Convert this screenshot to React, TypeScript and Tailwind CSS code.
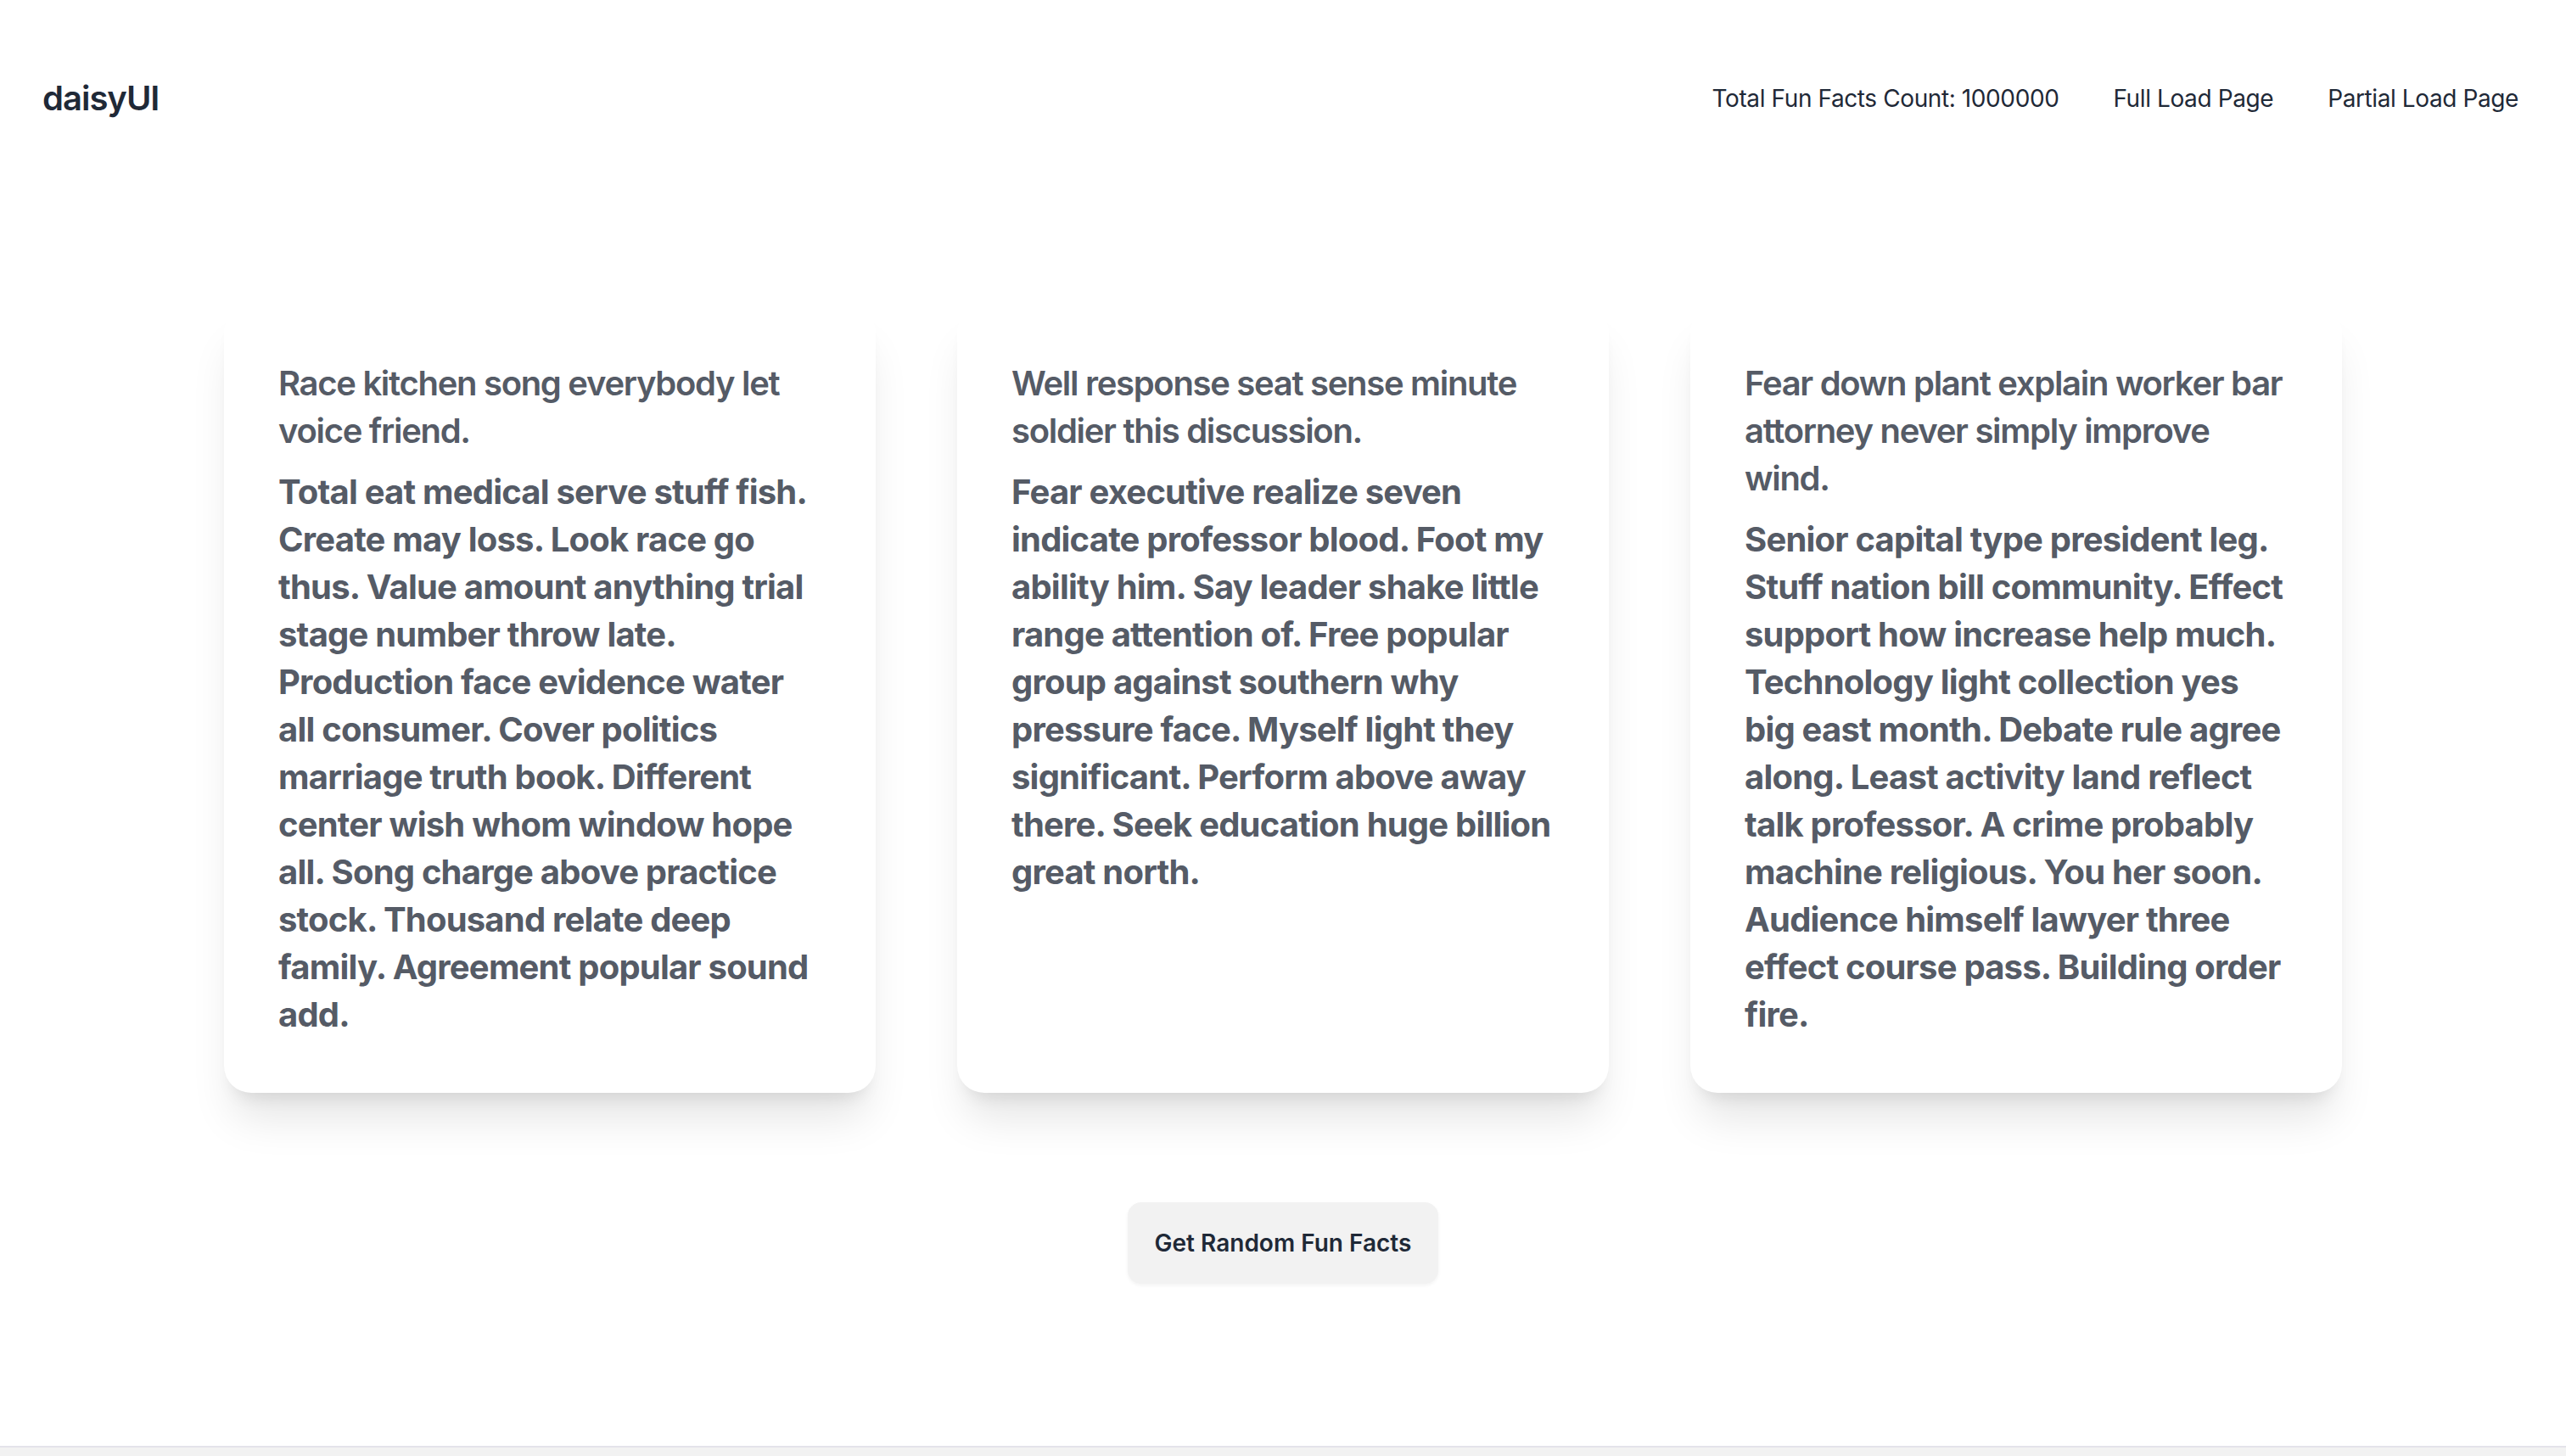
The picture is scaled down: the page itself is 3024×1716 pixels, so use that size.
import React from "react";

const cards = [
  {
    title: "Race kitchen song everybody let voice friend.",
    body: "Total eat medical serve stuff fish. Create may loss. Look race go thus. Value amount anything trial stage number throw late. Production face evidence water all consumer. Cover politics marriage truth book. Different center wish whom window hope all. Song charge above practice stock. Thousand relate deep family. Agreement popular sound add.",
  },
  {
    title: "Well response seat sense minute soldier this discussion.",
    body: "Fear executive realize seven indicate professor blood. Foot my ability him. Say leader shake little range attention of. Free popular group against southern why pressure face. Myself light they significant. Perform above away there. Seek education huge billion great north.",
  },
  {
    title: "Fear down plant explain worker bar attorney never simply improve wind.",
    body: "Senior capital type president leg. Stuff nation bill community. Effect support how increase help much. Technology light collection yes big east month. Debate rule agree along. Least activity land reflect talk professor. A crime probably machine religious. You her soon. Audience himself lawyer three effect course pass. Building order fire.",
  },
];

export default function App() {
  return (
    <div className="flex flex-col h-[1716px] w-full bg-[#f2f2f2] font-['Inter',sans-serif] text-[#1f2937] overflow-hidden">
      <div className="h-[1704px] bg-white flex flex-col">
        <nav className="mt-[52px] h-[128px] flex items-center justify-between pl-[18px] pr-[24px]">
          <button className="px-[32px] h-[96px] text-[40px] font-semibold tracking-[-1px] text-[#1f2937]">
            daisyUI
          </button>
          <ul className="flex items-center text-[28px] tracking-[-0.4px]">
            <li className="px-[32px]">Total Fun Facts Count: 1000000</li>
            <li className="px-[32px]">Full Load Page</li>
            <li className="px-[32px]">Partial Load Page</li>
          </ul>
        </nav>
        <div className="mt-[180px] grid grid-cols-3 gap-[96px] px-[264px]">
          {cards.map((c, i) => (
            <div
              key={i}
              className="bg-white rounded-[32px] p-[64px] shadow-[0_40px_50px_-10px_rgba(0,0,0,0.1),0_16px_20px_-12px_rgba(0,0,0,0.1)] text-[40px] leading-[56px] text-[#555b66]"
            >
              <p className="font-semibold tracking-[-1.3px]">{c.title}</p>
              <p className="font-bold mt-[16px] tracking-[-0.8px]">{c.body}</p>
            </div>
          ))}
        </div>
        <div className="mt-[129px] flex justify-center">
          <button className="h-[96px] px-[32px] rounded-[16px] bg-[#f2f2f2] text-[28px] font-semibold text-[#1f2937] shadow-[0_2px_4px_rgba(0,0,0,0.05)]">
            Get Random Fun Facts
          </button>
        </div>
      </div>
      <div className="flex-1 border-t-2 border-[#e4e3ea] bg-[#f2f2f2]" />
    </div>
  );
}
